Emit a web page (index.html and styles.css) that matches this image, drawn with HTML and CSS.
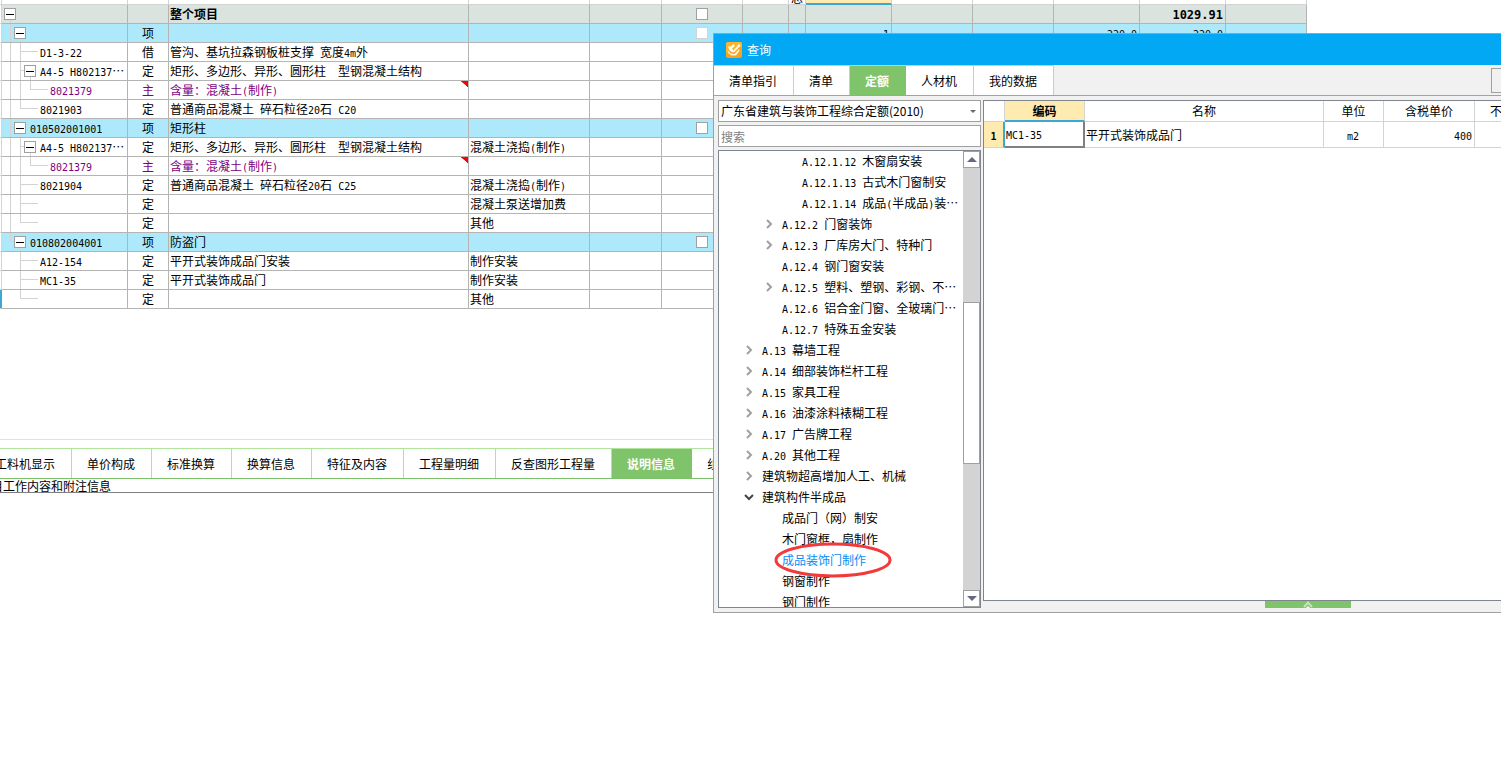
FILE: index.html
```html
<!DOCTYPE html>
<html lang="zh-CN">
<head>
<meta charset="utf-8">
<title>查询</title>
<link rel="stylesheet" href="styles.css">
</head>
<body>
<main class="workspace">
  <table class="sheet">
    <colgroup>
      <col class="w-edge"><col class="w-code"><col class="w-type"><col class="w-name"><col class="w-work"><col class="w-72"><col class="w-81"><col class="w-46"><col class="w-17"><col class="w-86"><col class="w-81"><col class="w-81"><col class="w-86"><col class="w-86"><col class="w-81">
    </colgroup>
    <thead>
      <tr><th></th><th></th><th></th><th></th><th></th><th></th><th></th><th></th><th><div class="cut">总</div></th><th class="current"></th><th></th><th></th><th></th><th></th><th></th></tr>
    </thead>
    <tbody>
      <tr class="total"><td></td><td><div class="node"><span class="g open"><button class="toggle" aria-label="折叠"></button></span></div></td><td></td><td>整个项目</td><td></td><td></td><td class="mid"><input type="checkbox" aria-label="锁定"></td><td></td><td></td><td></td><td></td><td></td><td></td><td class="num"><span class="sum">1029.91</span></td><td></td></tr>
      <tr class="item"><td></td><td><div class="node"><span class="g tee"></span><span class="g open"><button class="toggle" aria-label="折叠"></button></span></div></td><td class="mid">项</td><td></td><td></td><td></td><td class="mid"><input type="checkbox" aria-label="锁定" disabled></td><td></td><td></td><td class="num"><span class="c">1</span></td><td></td><td></td><td class="num"><span class="c">220.0</span></td><td class="num"><span class="c">220.0</span></td><td></td></tr>
      <tr><td></td><td><div class="node"><span class="g bar"></span><span class="g tee"></span><span class="stub"></span><span class="label"><span class="c">D1-3-22</span></span></div></td><td class="mid">借</td><td>管沟、基坑拉森钢板桩支撑<span class="c"> </span>宽度<span class="c">4m</span>外</td><td></td><td></td><td></td><td></td><td></td><td></td><td></td><td></td><td></td><td></td><td></td></tr>
      <tr><td></td><td><div class="node"><span class="g bar"></span><span class="g tee"></span><span class="g open"><button class="toggle" aria-label="折叠"></button></span><span class="label after-toggle"><span class="c">A4-5 H802137</span>⋯</span></div></td><td class="mid">定</td><td>矩形、多边形、异形、圆形柱<span class="c">  </span>型钢混凝土结构</td><td></td><td></td><td></td><td></td><td></td><td></td><td></td><td></td><td></td><td></td><td></td></tr>
      <tr class="main-material"><td></td><td><div class="node"><span class="g bar"></span><span class="g bar"></span><span class="g end"></span><span class="stub"></span><span class="label"><span class="c">8021379</span></span></div></td><td class="mid">主</td><td class="noted">含量：混凝土<span class="c">(</span>制作<span class="c">)</span></td><td></td><td></td><td></td><td></td><td></td><td></td><td></td><td></td><td></td><td></td><td></td></tr>
      <tr><td></td><td><div class="node"><span class="g bar"></span><span class="g end"></span><span class="stub"></span><span class="label"><span class="c">8021903</span></span></div></td><td class="mid">定</td><td>普通商品混凝土<span class="c"> </span>碎石粒径<span class="c">20</span>石<span class="c"> C20</span></td><td></td><td></td><td></td><td></td><td></td><td></td><td></td><td></td><td></td><td></td><td></td></tr>
      <tr class="item"><td></td><td><div class="node"><span class="g tee"></span><span class="g open"><button class="toggle" aria-label="折叠"></button></span><span class="label after-toggle"><span class="c">010502001001</span></span></div></td><td class="mid">项</td><td>矩形柱</td><td></td><td></td><td class="mid"><input type="checkbox" aria-label="锁定"></td><td></td><td></td><td></td><td></td><td></td><td></td><td></td><td></td></tr>
      <tr><td></td><td><div class="node"><span class="g bar"></span><span class="g tee"></span><span class="g open"><button class="toggle" aria-label="折叠"></button></span><span class="label after-toggle"><span class="c">A4-5 H802137</span>⋯</span></div></td><td class="mid">定</td><td>矩形、多边形、异形、圆形柱<span class="c">  </span>型钢混凝土结构</td><td>混凝土浇捣<span class="c">(</span>制作<span class="c">)</span></td><td></td><td></td><td></td><td></td><td></td><td></td><td></td><td></td><td></td><td></td></tr>
      <tr class="main-material"><td></td><td><div class="node"><span class="g bar"></span><span class="g bar"></span><span class="g end"></span><span class="stub"></span><span class="label"><span class="c">8021379</span></span></div></td><td class="mid">主</td><td class="noted">含量：混凝土<span class="c">(</span>制作<span class="c">)</span></td><td></td><td></td><td></td><td></td><td></td><td></td><td></td><td></td><td></td><td></td><td></td></tr>
      <tr><td></td><td><div class="node"><span class="g bar"></span><span class="g tee"></span><span class="stub"></span><span class="label"><span class="c">8021904</span></span></div></td><td class="mid">定</td><td>普通商品混凝土<span class="c"> </span>碎石粒径<span class="c">20</span>石<span class="c"> C25</span></td><td>混凝土浇捣<span class="c">(</span>制作<span class="c">)</span></td><td></td><td></td><td></td><td></td><td></td><td></td><td></td><td></td><td></td><td></td></tr>
      <tr><td></td><td><div class="node"><span class="g bar"></span><span class="g tee"></span><span class="stub"></span></div></td><td class="mid">定</td><td></td><td>混凝土泵送增加费</td><td></td><td></td><td></td><td></td><td></td><td></td><td></td><td></td><td></td><td></td></tr>
      <tr><td></td><td><div class="node"><span class="g bar"></span><span class="g end"></span><span class="stub"></span></div></td><td class="mid">定</td><td></td><td>其他</td><td></td><td></td><td></td><td></td><td></td><td></td><td></td><td></td><td></td><td></td></tr>
      <tr class="item"><td></td><td><div class="node"><span class="g end"></span><span class="g open"><button class="toggle" aria-label="折叠"></button></span><span class="label after-toggle"><span class="c">010802004001</span></span></div></td><td class="mid">项</td><td>防盗门</td><td></td><td></td><td class="mid"><input type="checkbox" aria-label="锁定"></td><td></td><td></td><td></td><td></td><td></td><td></td><td></td><td></td></tr>
      <tr><td></td><td><div class="node"><span class="g"></span><span class="g tee"></span><span class="stub"></span><span class="label"><span class="c">A12-154</span></span></div></td><td class="mid">定</td><td>平开式装饰成品门安装</td><td>制作安装</td><td></td><td></td><td></td><td></td><td></td><td></td><td></td><td></td><td></td><td></td></tr>
      <tr><td></td><td><div class="node"><span class="g"></span><span class="g tee"></span><span class="stub"></span><span class="label"><span class="c">MC1-35</span></span></div></td><td class="mid">定</td><td>平开式装饰成品门</td><td>制作安装</td><td></td><td></td><td></td><td></td><td></td><td></td><td></td><td></td><td></td><td></td></tr>
      <tr class="active-row"><td></td><td><div class="node"><span class="g"></span><span class="g end"></span><span class="stub"></span></div></td><td class="mid">定</td><td></td><td>其他</td><td></td><td></td><td></td><td></td><td></td><td></td><td></td><td></td><td></td><td></td></tr>
    </tbody>
  </table>

  <section class="details">
    <nav class="tabs detail-tabs">
      <button>工料机显示</button><button>单价构成</button><button>标准换算</button><button>换算信息</button><button>特征及内容</button><button>工程量明细</button><button>反查图形工程量</button><button class="on">说明信息</button><button>组价方案</button>
    </nav>
    <div class="detail-title"><span>子目工作内容和附注信息</span></div>
  </section>
</main>

<section class="dialog" role="dialog" aria-labelledby="dialog-title">
  <header class="titlebar">
    <svg width="16" height="16" viewBox="0 0 16 16" aria-hidden="true">
      <rect width="16" height="16" rx="2" fill="#f9a31a"/>
      <path d="M0 2a2 2 0 0 1 2-2h12a2 2 0 0 1 2 2v3L0 11z" fill="#fdb62b"/>
      <path d="M2 4.500C4 5 6 4 7.500 2L9 3.500 6 7l1.500 1.500L13 2l1.500 1.500L8 10.500 5.500 10 3.500 8z" fill="#fff"/>
      <path d="M1.500 8.500l3.500 3 3.500.5L13 7l.5 2-3.500 4.500H5.500L2.500 11.500z" fill="#fff3dc"/>
    </svg>
    <span id="dialog-title">查询</span>
  </header>
  <div class="dialog-nav">
    <nav class="tabs">
      <button>清单指引</button><button>清单</button><button class="on">定额</button><button>人材机</button><button>我的数据</button>
    </nav>
    <button class="side-action" aria-label="更多"></button>
  </div>
  <div class="dialog-body">
    <aside class="finder">
      <div class="picker">
        <select aria-label="定额库"><option>广东省建筑与装饰工程综合定额(2010)</option></select>
        <svg width="6" height="3" viewBox="0 0 6 3" aria-hidden="true"><path d="M0 0h6L3 3z" fill="#666a72"/></svg>
      </div>
      <input class="search" type="text" placeholder="搜索" aria-label="搜索">
      <div class="tree-box">
        <ul class="tree">
          <li class="l3"><span class="c">A.12.1.12 </span>木窗扇安装</li>
          <li class="l3"><span class="c">A.12.1.13 </span>古式木门窗制安</li>
          <li class="l3"><span class="c">A.12.1.14 </span>成品<span class="c">(</span>半成品<span class="c">)</span>装⋯</li>
          <li class="l2"><svg class="arrow"><use href="#closed"/></svg><span class="c">A.12.2 </span>门窗装饰</li>
          <li class="l2"><svg class="arrow"><use href="#closed"/></svg><span class="c">A.12.3 </span>厂库房大门、特种门</li>
          <li class="l2"><span class="c">A.12.4 </span>钢门窗安装</li>
          <li class="l2"><svg class="arrow"><use href="#closed"/></svg><span class="c">A.12.5 </span>塑料、塑钢、彩钢、不⋯</li>
          <li class="l2"><span class="c">A.12.6 </span>铝合金门窗、全玻璃门⋯</li>
          <li class="l2"><span class="c">A.12.7 </span>特殊五金安装</li>
          <li class="l1"><svg class="arrow"><use href="#closed"/></svg><span class="c">A.13 </span>幕墙工程</li>
          <li class="l1"><svg class="arrow"><use href="#closed"/></svg><span class="c">A.14 </span>细部装饰栏杆工程</li>
          <li class="l1"><svg class="arrow"><use href="#closed"/></svg><span class="c">A.15 </span>家具工程</li>
          <li class="l1"><svg class="arrow"><use href="#closed"/></svg><span class="c">A.16 </span>油漆涂料裱糊工程</li>
          <li class="l1"><svg class="arrow"><use href="#closed"/></svg><span class="c">A.17 </span>广告牌工程</li>
          <li class="l1"><svg class="arrow"><use href="#closed"/></svg><span class="c">A.20 </span>其他工程</li>
          <li class="l1"><svg class="arrow"><use href="#closed"/></svg>建筑物超高增加人工、机械</li>
          <li class="l1"><svg class="arrow"><use href="#opened"/></svg>建筑构件半成品</li>
          <li class="l2">成品门（网）制安</li>
          <li class="l2">木门窗框，扇制作</li>
          <li class="l2 picked">成品装饰门制作<svg class="ring" viewBox="0 0 118 36" aria-hidden="true"><ellipse cx="59" cy="18" rx="57" ry="16" fill="none" stroke="#f23a3a" stroke-width="3"/></svg></li>
          <li class="l2">钢窗制作</li>
          <li class="l2">钢门制作</li>
        </ul>
        <div class="scrollbar">
          <button aria-label="向上"><svg width="10" height="5" viewBox="0 0 10 5"><path d="M0 5h10L5 0z" fill="#666a80"/></svg></button>
          <div class="above"></div>
          <div class="thumb"></div>
          <div class="below"></div>
          <button aria-label="向下"><svg width="10" height="5" viewBox="0 0 10 5"><path d="M0 0h10L5 5z" fill="#666a80"/></svg></button>
        </div>
      </div>
    </aside>
    <div class="results-side">
      <div class="results">
        <table>
          <colgroup><col class="r-index"><col class="r-code"><col class="r-name"><col class="r-unit"><col class="r-price"><col class="r-price"></colgroup>
          <thead><tr><th></th><th class="chosen">编码</th><th>名称</th><th>单位</th><th>含税单价</th><th>不含税单价</th></tr></thead>
          <tbody><tr><th class="index"><span class="c">1</span></th><td class="focus"><span class="c">MC1-35</span></td><td>平开式装饰成品门</td><td class="mid"><span class="c">m2</span></td><td class="num"><span class="c">400</span></td><td></td></tr></tbody>
        </table>
      </div>
      <button class="expander" aria-label="展开"><svg width="10" height="7" viewBox="0 0 10 7"><path d="M1 6L5 1.500 9 6" fill="none" stroke="#c3e6b6" stroke-width="2"/><path d="M3 7l2-2 2 2z" fill="#fff"/></svg></button>
    </div>
  </div>
</section>

<svg class="defs" width="0" height="0" aria-hidden="true">
  <symbol id="closed" viewBox="0 0 10 10"><path d="M3 1l4 4-4 4" fill="none" stroke="#a0a0a0" stroke-width="2"/></symbol>
  <symbol id="opened" viewBox="0 0 10 10"><path d="M1 3l4 4 4-4" fill="none" stroke="#444" stroke-width="2"/></symbol>
</svg>
</body>
</html>
```

FILE: styles.css
```css
* { box-sizing: border-box; }

body {
  margin: 0;
  min-height: 100vh;
  overflow: hidden;
  position: relative;
  background: #fff;
  color: #000;
  font: 12px/18px "Noto Sans CJK SC", sans-serif;
}

button, input, select { font: inherit; color: inherit; margin: 0; }
button { padding: 0; border: 0; border-radius: 0; background: none; }

.c {
  font-family: "DejaVu Sans Mono", monospace;
  font-size: 10px;
  line-height: 10px;
  white-space: pre;
}

.mid { text-align: center; }

/* Bill of quantities sheet */
.workspace { overflow: hidden; }

.sheet {
  width: 1307px;
  table-layout: fixed;
  border-collapse: separate;
  border-spacing: 0;
}
.w-edge { width: 2px; }
.w-code { width: 126px; }
.w-type { width: 41px; }
.w-name { width: 300px; }
.w-work { width: 121px; }
.w-72 { width: 72px; }
.w-81 { width: 81px; }
.w-46 { width: 46px; }
.w-17 { width: 17px; }
.w-86 { width: 86px; }

.sheet th, .sheet td {
  padding: 0;
  border-right: 1px solid #b4b4b4;
  border-bottom: 1px solid #b4b4b4;
  white-space: nowrap;
  overflow: hidden;
}
.sheet th {
  height: 5px;
  border-color: #d3d3d3;
  font-weight: 400;
}
.sheet th.current { background: #ffebb0; border-bottom: 2px solid #3ba7d4; }
.cut {
  height: 4px;
  overflow: hidden;
  display: flex;
  align-items: flex-end;
  justify-content: center;
  line-height: 12px;
}
.sheet td { height: 19px; padding: 0 2px 0 1px; }
.sheet td.mid { padding: 0; }
.sheet td:first-child { padding: 0; border-color: #d3d3d3; background: #fff; }
.sheet td:nth-child(2) { padding: 0 0 0 3px; }
.num { text-align: right; }
.sheet .total td { background: #dae3dd; font-weight: 700; }
.sheet .item td { background: #ade9fb; }
.sheet .total td:first-child, .sheet .item td:first-child { background: #fff; }
.sheet .active-row td:first-child { background: #3ba7d4; border-right-color: #3ba7d4; }
.sum { font-family: "DejaVu Sans Mono", monospace; font-size: 12px; line-height: 12px; }
.main-material { color: #800080; }
.noted {
  background: linear-gradient(to top right, transparent 45%, #f00 50%) top right / 7px 6px no-repeat;
}

.sheet input {
  appearance: none;
  display: block;
  width: 12px;
  height: 12px;
  margin: 0 auto;
  border: 1px solid #a0a0a0;
  background: #fff;
}
.sheet input:disabled { border-color: #d3d3d3; }

/* Tree guides in the code column */
.node { display: flex; height: 18px; }
.g {
  display: flex;
  flex: none;
  width: 10px;
  align-items: center;
  justify-content: center;
  background-repeat: no-repeat;
  --line: linear-gradient(#d3d3d3, #d3d3d3);
}
.bar { background-image: var(--line); background-size: 1px 100%; background-position: 5px 0; }
.tee {
  background-image: var(--line), var(--line);
  background-size: 1px 100%, 5px 1px;
  background-position: 5px 0, 5px 8px;
}
.end {
  background-image: var(--line), var(--line);
  background-size: 1px 9px, 5px 1px;
  background-position: 5px 0, 5px 8px;
}
.open { background-image: var(--line); background-size: 1px 9px; background-position: 5px 100%; }
.stub {
  flex: none;
  width: 13px;
  margin-right: 2px;
  background: linear-gradient(#d3d3d3, #d3d3d3) 0 8px / 100% 1px no-repeat;
}
.toggle {
  flex: none;
  width: 12px;
  height: 12px;
  border: 1px solid #a0a0a0;
  background: linear-gradient(#000, #000) center / 8px 1px no-repeat #fff;
}
.after-toggle { margin-left: 5px; }

/* Tabs shared by the sheet details and the dialog */
.tabs { display: flex; border-top: 1px solid #b0e39b; border-bottom: 1px solid #7bc169; }
.tabs button {
  flex: none;
  height: 29px;
  padding: 1px 16px 0 15px;
  border-right: 1px solid #b0e39b;
  background: #fff;
  white-space: nowrap;
}
.tabs .on { background: #7fc46a; border-color: #7fc46a; color: #fff; font-weight: 700; }

.details {
  margin-top: 130px;
  padding-top: 8px;
  border-top: 1px solid #e1e1e1;
}
.detail-tabs button:first-child { margin-left: -20px; }
.detail-title {
  height: 14px;
  border-bottom: 1px solid #808080;
  line-height: 14px;
}
.detail-title span { margin-left: -21px; }

/* Query dialog */
.dialog {
  position: absolute;
  top: 33px;
  left: 713px;
  right: 0;
  border: 1px solid #a0a0a0;
  border-right: 0;
  background: #f1f1f1;
  overflow: hidden;
}
.titlebar {
  display: flex;
  align-items: center;
  gap: 5px;
  height: 31px;
  padding-left: 12px;
  background: #02a8f3;
  color: #fff;
}
.dialog-nav {
  display: flex;
  align-items: center;
  justify-content: space-between;
  border-bottom: 1px solid #7bc169;
}
.dialog-nav .tabs { border-bottom: 0; }
.side-action {
  width: 24px;
  height: 25px;
  margin-right: -14px;
  border: 1px solid #a0a0a0;
}
.dialog-body { display: flex; gap: 2px; padding: 4px 0 4px 4px; }
.finder { flex: none; width: 263px; display: grid; gap: 3px; }
.picker { display: grid; }
.picker > * { grid-area: 1 / 1; }
.picker svg { align-self: center; justify-self: end; margin-right: 5px; }
.picker select, .search {
  appearance: none;
  width: 100%;
  height: 22px;
  padding: 0 2px;
  border: 1px solid #a0a0a0;
  border-radius: 0;
  background: #fff;
}
.search::placeholder { color: #808080; }

.tree-box {
  display: flex;
  height: 458px;
  border: 1px solid #808690;
  background: #fff;
}
.tree { flex: 1; margin: 0; padding: 0; list-style: none; overflow: hidden; }
.tree li {
  position: relative;
  height: 21px;
  line-height: 20px;
  white-space: nowrap;
}
.l1 { padding-left: 43px; }
.l2 { padding-left: 63px; }
.l3 { padding-left: 83px; }
.arrow { width: 10px; height: 10px; margin: 0 8px 0 -18px; }
.picked { color: #0a8cf5; z-index: 1; }
.ring {
  position: absolute;
  top: -8px;
  left: 55px;
  width: 118px;
  height: 36px;
}

.scrollbar { flex: none; display: flex; flex-direction: column; width: 17px; background: #d3d3d3; }
.scrollbar button {
  display: flex;
  align-items: center;
  justify-content: center;
  height: 17px;
  border: 1px solid #a0a0a0;
  background: #fff;
}
.above { flex: 135; }
.thumb { flex: 160; border: 1px solid #a0a0a0; background: #fff; }
.below { flex: 127; }

.results-side { flex: 1; min-width: 0; display: flex; flex-direction: column; }
.results {
  flex: 1;
  border: 1px solid #808690;
  border-right: 0;
  background: #fff;
  overflow: hidden;
}
.results table {
  width: 582px;
  table-layout: fixed;
  border-collapse: separate;
  border-spacing: 0;
}
.r-index { width: 21px; }
.r-code { width: 80px; }
.r-name { width: 239px; }
.r-unit { width: 60px; }
.r-price { width: 91px; }
.results th, .results td {
  padding: 0 2px 0 1px;
  border-right: 1px solid #d3d3d3;
  border-bottom: 1px solid #d3d3d3;
}
.results th { height: 21px; padding: 0; font-weight: 400; }
.results td { height: 26px; }
.results th.chosen { background: #ffebb0; border-bottom: 2px solid #3ba7d4; font-weight: 700; }
.results th.index { background: #ffebb0; border-right: 2px solid #3ba7d4; font-weight: 700; }
.results td.focus { border-right: 2px solid #808080; border-bottom: 2px solid #808080; }
.expander {
  display: flex;
  justify-content: center;
  width: 86px;
  height: 7px;
  margin-left: 282px;
  background: #7fc46a;
}
.defs { position: absolute; }
```
